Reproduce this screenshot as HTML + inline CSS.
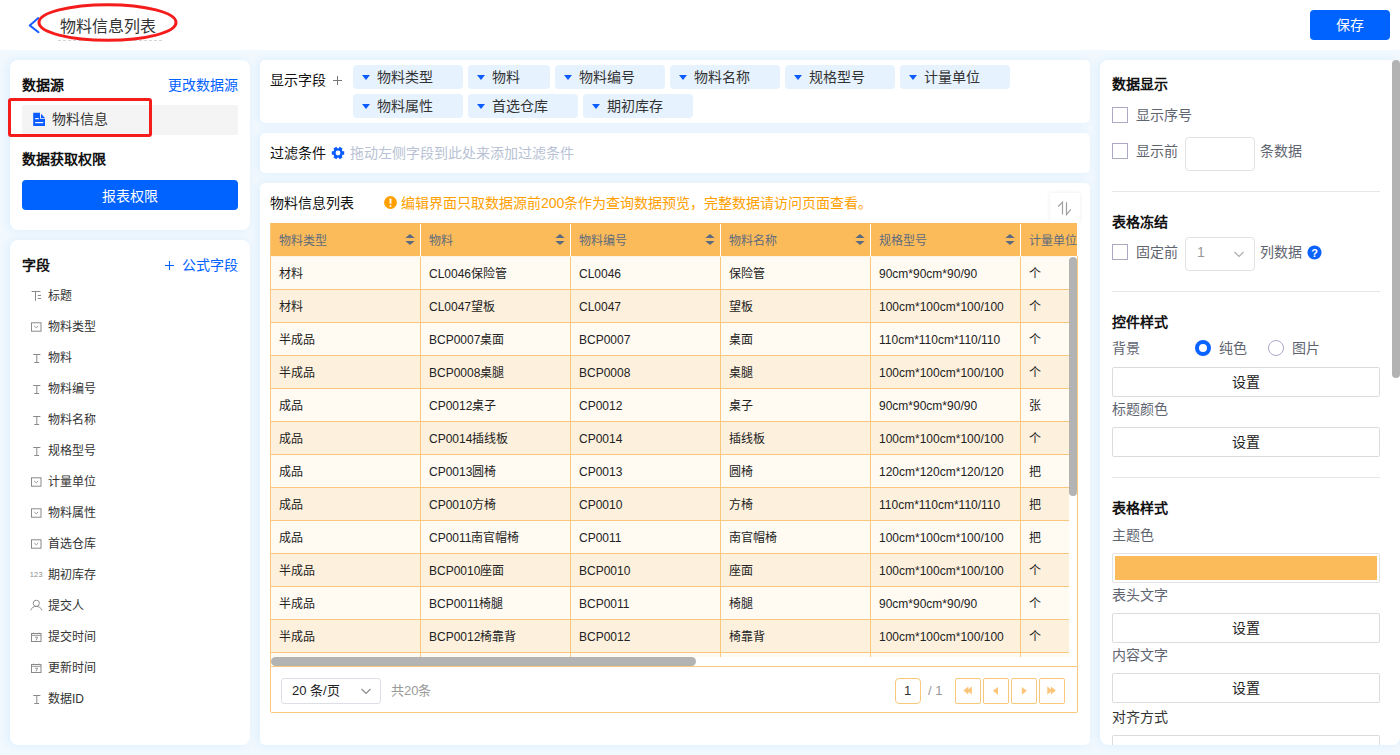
<!DOCTYPE html>
<html lang="zh-CN"><head><meta charset="utf-8">
<style>
*{box-sizing:border-box;margin:0;padding:0}
html,body{width:1400px;height:755px;overflow:hidden}
body{position:relative;font-family:"Liberation Sans",sans-serif;background:#f1f8fe;color:#333}
.a{position:absolute}
.t{position:absolute;white-space:nowrap}
.f12{font-size:12px;line-height:12px}
.f13{font-size:13px;line-height:13px}
.f14{font-size:14px;line-height:12px}
.f16{font-size:16px;line-height:16px}
.b{font-weight:bold}
.panel{position:absolute;background:#fff;border-radius:8px;box-shadow:-2px 0 8px rgba(0,150,255,0.09)}
.pc{border-radius:5px}
.blue{color:#0062ff}
.chip{position:absolute;height:24px;background:#e6f2fe;border-radius:4px}
.chip i{position:absolute;left:9px;top:9px;width:0;height:0;border-left:4px solid transparent;border-right:4px solid transparent;border-top:5px solid #0a5cff;top:10px}
.chip span{position:absolute;left:24px;top:6px;font-size:14px;line-height:12px;color:#333;white-space:nowrap}
.fi{position:absolute;left:22px;width:200px;height:20px}
.fi span{position:absolute;left:26px;top:4px;font-size:12px;line-height:12px;color:#333;white-space:nowrap}
.fi svg{position:absolute;left:8px;top:0}
.cell{position:absolute;font-size:12px;line-height:12px;color:#222;white-space:nowrap}
.hd{position:absolute;font-size:12px;line-height:12px;color:#5e6b7d;white-space:nowrap}
.lbl{position:absolute;font-size:14px;line-height:12px;color:#5f6570;white-space:nowrap}
.hdr{position:absolute;font-size:14px;line-height:12px;color:#111;font-weight:bold;white-space:nowrap}
.btn{position:absolute;left:1112px;width:268px;height:30px;border:1px solid #dcdcdc;border-radius:2px;background:#fff}
.btn span{position:absolute;left:0;right:0;top:8px;text-align:center;font-size:14px;line-height:12px;color:#222}
.cb{position:absolute;width:16px;height:16px;border:1px solid #aaaac2;border-radius:0;background:#fff}
.hr{position:absolute;left:1112px;width:268px;height:1px;background:#e6e6e6}
</style></head><body>

<div class="a" style="left:0;top:0;width:1400px;height:50px;background:#fff"></div>
<svg class="a" style="left:24px;top:12px" width="24" height="28" viewBox="0 0 24 28"><path d="M14.3 6.1 L5.7 13.4 L14.5 20.2" fill="none" stroke="#1a5cff" stroke-width="2" stroke-linecap="round" stroke-linejoin="round"/></svg>
<div class="t f16" style="left:60px;top:19px;color:#333">物料信息列表</div>
<div class="a" style="left:58px;top:40px;width:104px;border-top:1px dashed #d4d4d4"></div>
<svg class="a" style="left:36px;top:2px" width="144" height="42" viewBox="0 0 144 42"><ellipse cx="71.5" cy="20.5" rx="68.5" ry="17.8" fill="none" stroke="#f51c1c" stroke-width="3"/></svg>
<div class="a" style="left:1310px;top:10px;width:80px;height:30px;background:#0062ff;border-radius:4px"></div>
<div class="t f14" style="left:1336px;top:19px;color:#fff">保存</div>

<div class="panel" style="left:10px;top:60px;width:240px;height:170px"></div>
<div class="t f14 b" style="left:22px;top:79px;color:#111">数据源</div>
<div class="t f14 blue" style="left:168px;top:79px">更改数据源</div>
<div class="a" style="left:22px;top:105px;width:216px;height:30px;background:#f4f4f5;border-radius:2px"></div>
<svg class="a" style="left:28px;top:108px" width="24" height="24" viewBox="0 0 24 24"><path d="M5.2 4.8 H12 V10.8 H17 V18.1 H5.2Z" fill="#0a5cff"/><path d="M13 5.7 L17 9.9 H13Z" fill="#0a5cff"/><rect x="7.2" y="10" width="3.6" height="1.2" fill="#fff"/><rect x="7.2" y="14" width="8" height="1.2" fill="#fff"/></svg>
<div class="t f14" style="left:52px;top:113px;color:#333">物料信息</div>
<div class="a" style="left:8px;top:98px;width:144px;height:39px;border:3px solid #f51c1c;border-radius:3px"></div>
<div class="t f14 b" style="left:22px;top:153px;color:#111">数据获取权限</div>
<div class="a" style="left:22px;top:180px;width:216px;height:30px;background:#0062ff;border-radius:4px"></div>
<div class="t f14" style="left:102px;top:190px;color:#fff">报表权限</div>

<div class="panel" style="left:10px;top:240px;width:240px;height:505px"></div>
<div class="t f14 b" style="left:22px;top:259px;color:#111">字段</div>
<svg class="a" style="left:164px;top:260px" width="11" height="11" viewBox="0 0 11 11"><path d="M5.5 1V10M1 5.5H10" stroke="#0062ff" stroke-width="1.1"/></svg><div class="t f14 blue" style="left:182px;top:259px">公式字段</div>

<div class="fi" style="top:286px"><svg width="14" height="20" viewBox="0 0 14 20"><path d="M1.6 5.5H10.4M5.5 5.5V14.8M7.8 9.5H11M7.8 12.5H11" stroke="#8a8a8a" stroke-width="1" fill="none"/></svg><span>标题</span></div>
<div class="fi" style="top:317px"><svg width="14" height="20" viewBox="0 0 14 20"><rect x="1.5" y="5.8" width="9.5" height="8.4" fill="none" stroke="#8a8a8a"/><path d="M4.3 9L6.25 10.8L8.2 9" stroke="#8a8a8a" fill="none" stroke-width="0.9"/></svg><span>物料类型</span></div>
<div class="fi" style="top:348px"><svg width="14" height="20" viewBox="0 0 14 20"><path d="M3.2 6.5H10.4M6.8 6.5V14.3M4.3 14.5H9.1" stroke="#8a8a8a" stroke-width="1" fill="none"/></svg><span>物料</span></div>
<div class="fi" style="top:379px"><svg width="14" height="20" viewBox="0 0 14 20"><path d="M3.2 6.5H10.4M6.8 6.5V14.3M4.3 14.5H9.1" stroke="#8a8a8a" stroke-width="1" fill="none"/></svg><span>物料编号</span></div>
<div class="fi" style="top:410px"><svg width="14" height="20" viewBox="0 0 14 20"><path d="M3.2 6.5H10.4M6.8 6.5V14.3M4.3 14.5H9.1" stroke="#8a8a8a" stroke-width="1" fill="none"/></svg><span>物料名称</span></div>
<div class="fi" style="top:441px"><svg width="14" height="20" viewBox="0 0 14 20"><path d="M3.2 6.5H10.4M6.8 6.5V14.3M4.3 14.5H9.1" stroke="#8a8a8a" stroke-width="1" fill="none"/></svg><span>规格型号</span></div>
<div class="fi" style="top:472px"><svg width="14" height="20" viewBox="0 0 14 20"><rect x="1.5" y="5.8" width="9.5" height="8.4" fill="none" stroke="#8a8a8a"/><path d="M4.3 9L6.25 10.8L8.2 9" stroke="#8a8a8a" fill="none" stroke-width="0.9"/></svg><span>计量单位</span></div>
<div class="fi" style="top:503px"><svg width="14" height="20" viewBox="0 0 14 20"><rect x="1.5" y="5.8" width="9.5" height="8.4" fill="none" stroke="#8a8a8a"/><path d="M4.3 9L6.25 10.8L8.2 9" stroke="#8a8a8a" fill="none" stroke-width="0.9"/></svg><span>物料属性</span></div>
<div class="fi" style="top:534px"><svg width="14" height="20" viewBox="0 0 14 20"><rect x="1.5" y="5.8" width="9.5" height="8.4" fill="none" stroke="#8a8a8a"/><path d="M4.3 9L6.25 10.8L8.2 9" stroke="#8a8a8a" fill="none" stroke-width="0.9"/></svg><span>首选仓库</span></div>
<div class="fi" style="top:565px"><svg width="16" height="20" viewBox="0 0 16 20"><text x="-0.3" y="12.2" font-size="7.4" fill="#8a8a8a" font-family="Liberation Sans" letter-spacing="0.3">123</text></svg><span>期初库存</span></div>
<div class="fi" style="top:596px"><svg width="14" height="20" viewBox="0 0 14 20"><circle cx="6.3" cy="7.3" r="3.1" fill="none" stroke="#8a8a8a" stroke-width="0.95"/><path d="M0.8 14.3C1.6 11.6 3.8 10.4 6.3 10.4S11 11.6 11.8 14.3" fill="none" stroke="#8a8a8a" stroke-width="0.95"/></svg><span>提交人</span></div>
<div class="fi" style="top:627px"><svg width="14" height="20" viewBox="0 0 14 20"><rect x="1.5" y="6.5" width="9.5" height="8" fill="none" stroke="#8a8a8a"/><path d="M1.5 8.3H11M3.5 5.6V7M9 5.6V7M5 10.2H7.6L6 13.4" stroke="#8a8a8a" stroke-width="0.9" fill="none"/></svg><span>提交时间</span></div>
<div class="fi" style="top:658px"><svg width="14" height="20" viewBox="0 0 14 20"><rect x="1.5" y="6.5" width="9.5" height="8" fill="none" stroke="#8a8a8a"/><path d="M1.5 8.3H11M3.5 5.6V7M9 5.6V7M5 10.2H7.6L6 13.4" stroke="#8a8a8a" stroke-width="0.9" fill="none"/></svg><span>更新时间</span></div>
<div class="fi" style="top:689px"><svg width="14" height="20" viewBox="0 0 14 20"><path d="M3.2 6.5H10.4M6.8 6.5V14.3M4.3 14.5H9.1" stroke="#8a8a8a" stroke-width="1" fill="none"/></svg><span>数据ID</span></div>
<div class="panel pc" style="left:260px;top:60px;width:830px;height:63px"></div>
<div class="t f14" style="left:270px;top:74px;color:#111">显示字段</div>
<svg class="a" style="left:333px;top:76px" width="9" height="9" viewBox="0 0 9 9"><path d="M4.5 0V9M0 4.5H9" stroke="#777" stroke-width="1"/></svg>

<div class="chip" style="left:353px;top:65px;width:110px"><i></i><span>物料类型</span></div>
<div class="chip" style="left:468px;top:65px;width:82px"><i></i><span>物料</span></div>
<div class="chip" style="left:555px;top:65px;width:110px"><i></i><span>物料编号</span></div>
<div class="chip" style="left:670px;top:65px;width:110px"><i></i><span>物料名称</span></div>
<div class="chip" style="left:785px;top:65px;width:110px"><i></i><span>规格型号</span></div>
<div class="chip" style="left:900px;top:65px;width:110px"><i></i><span>计量单位</span></div>
<div class="chip" style="left:353px;top:94px;width:110px"><i></i><span>物料属性</span></div>
<div class="chip" style="left:468px;top:94px;width:110px"><i></i><span>首选仓库</span></div>
<div class="chip" style="left:583px;top:94px;width:110px"><i></i><span>期初库存</span></div>
<div class="panel pc" style="left:260px;top:133px;width:830px;height:40px"></div>
<div class="t f14" style="left:270px;top:147px;color:#111">过滤条件</div>
<svg class="a" style="left:330.5px;top:146px" width="14" height="14" viewBox="0 0 14 14"><path d="M11.55 5.17 L13.18 5.34 L13.18 8.66 L11.55 8.83 L10.85 10.03 L11.53 11.53 L8.66 13.18 L7.69 11.85 L6.31 11.85 L5.34 13.18 L2.47 11.53 L3.15 10.03 L2.45 8.83 L0.82 8.66 L0.82 5.34 L2.45 5.17 L3.15 3.97 L2.47 2.47 L5.34 0.82 L6.31 2.15 L7.69 2.15 L8.66 0.82 L11.53 2.47 L10.85 3.97Z" fill="#0a5cff"/><circle cx="7" cy="7" r="2.4" fill="#fff"/></svg>
<div class="t f14" style="left:350px;top:147px;color:#b8c2d4">拖动左侧字段到此处来添加过滤条件</div>

<div class="panel pc" style="left:260px;top:183px;width:830px;height:562px"></div>
<div class="t f14" style="left:270px;top:197px;color:#111">物料信息列表</div>
<svg class="a" style="left:384px;top:196px" width="13" height="13" viewBox="0 0 13 13"><circle cx="6.5" cy="6.5" r="6.4" fill="#ffa000"/><rect x="5.6" y="2.6" width="1.8" height="5.2" rx="0.6" fill="#fff"/><circle cx="6.5" cy="9.9" r="1" fill="#fff"/></svg>
<div class="t f14" style="left:401px;top:197px;color:#ffa000">编辑界面只取数据源前200条作为查询数据预览，完整数据请访问页面查看。</div>
<div class="a" style="left:1050px;top:193px;width:30px;height:30px;background:#fff;box-shadow:0 0 4px rgba(0,0,0,0.08)"></div>
<svg class="a" style="left:1050px;top:193px" width="30" height="30" viewBox="0 0 30 30"><path d="M8.2 13.5L12.5 9.2V21.6M16.5 9.2V21.6L20.8 16.3" fill="none" stroke="#a0a0a0" stroke-width="1.2"/></svg>

<div class="a" style="left:270px;top:223px;width:808px;height:443px;overflow:hidden;background:#fff">
<div class="a" style="left:0;top:0;width:807px;height:33px;background:#fbbb5a"></div>
<div class="hd" style="left:9px;top:12px">物料类型</div>
<svg class="a" style="left:135px;top:10px" width="10" height="13" viewBox="0 0 10 13"><path d="M5 0.9L9.7 5H0.3Z M5 12.1L9.7 8H0.3Z" fill="#5a6a80"/></svg>
<div class="a" style="left:150px;top:1px;width:1px;height:32px;background:#fff"></div>
<div class="hd" style="left:159px;top:12px">物料</div>
<svg class="a" style="left:285px;top:10px" width="10" height="13" viewBox="0 0 10 13"><path d="M5 0.9L9.7 5H0.3Z M5 12.1L9.7 8H0.3Z" fill="#5a6a80"/></svg>
<div class="a" style="left:300px;top:1px;width:1px;height:32px;background:#fff"></div>
<div class="hd" style="left:309px;top:12px">物料编号</div>
<svg class="a" style="left:435px;top:10px" width="10" height="13" viewBox="0 0 10 13"><path d="M5 0.9L9.7 5H0.3Z M5 12.1L9.7 8H0.3Z" fill="#5a6a80"/></svg>
<div class="a" style="left:450px;top:1px;width:1px;height:32px;background:#fff"></div>
<div class="hd" style="left:459px;top:12px">物料名称</div>
<svg class="a" style="left:585px;top:10px" width="10" height="13" viewBox="0 0 10 13"><path d="M5 0.9L9.7 5H0.3Z M5 12.1L9.7 8H0.3Z" fill="#5a6a80"/></svg>
<div class="a" style="left:600px;top:1px;width:1px;height:32px;background:#fff"></div>
<div class="hd" style="left:609px;top:12px">规格型号</div>
<svg class="a" style="left:735px;top:10px" width="10" height="13" viewBox="0 0 10 13"><path d="M5 0.9L9.7 5H0.3Z M5 12.1L9.7 8H0.3Z" fill="#5a6a80"/></svg>
<div class="a" style="left:750px;top:1px;width:1px;height:32px;background:#fff"></div>
<div class="hd" style="left:759px;top:12px">计量单位</div>
<div class="a" style="left:0;top:34px;width:799px;height:33px;background:#fffaf2;border-bottom:1px solid #f9c87c"></div>
<div class="cell" style="left:9px;top:45px">材料</div>
<div class="cell" style="left:159px;top:45px">CL0046保险管</div>
<div class="cell" style="left:309px;top:45px">CL0046</div>
<div class="cell" style="left:459px;top:45px">保险管</div>
<div class="cell" style="left:609px;top:45px">90cm*90cm*90/90</div>
<div class="cell" style="left:759px;top:45px">个</div>
<div class="a" style="left:0;top:67px;width:799px;height:33px;background:#fdf0dd;border-bottom:1px solid #f9c87c"></div>
<div class="cell" style="left:9px;top:78px">材料</div>
<div class="cell" style="left:159px;top:78px">CL0047望板</div>
<div class="cell" style="left:309px;top:78px">CL0047</div>
<div class="cell" style="left:459px;top:78px">望板</div>
<div class="cell" style="left:609px;top:78px">100cm*100cm*100/100</div>
<div class="cell" style="left:759px;top:78px">个</div>
<div class="a" style="left:0;top:100px;width:799px;height:33px;background:#fffaf2;border-bottom:1px solid #f9c87c"></div>
<div class="cell" style="left:9px;top:111px">半成品</div>
<div class="cell" style="left:159px;top:111px">BCP0007桌面</div>
<div class="cell" style="left:309px;top:111px">BCP0007</div>
<div class="cell" style="left:459px;top:111px">桌面</div>
<div class="cell" style="left:609px;top:111px">110cm*110cm*110/110</div>
<div class="cell" style="left:759px;top:111px">个</div>
<div class="a" style="left:0;top:133px;width:799px;height:33px;background:#fdf0dd;border-bottom:1px solid #f9c87c"></div>
<div class="cell" style="left:9px;top:144px">半成品</div>
<div class="cell" style="left:159px;top:144px">BCP0008桌腿</div>
<div class="cell" style="left:309px;top:144px">BCP0008</div>
<div class="cell" style="left:459px;top:144px">桌腿</div>
<div class="cell" style="left:609px;top:144px">100cm*100cm*100/100</div>
<div class="cell" style="left:759px;top:144px">个</div>
<div class="a" style="left:0;top:166px;width:799px;height:33px;background:#fffaf2;border-bottom:1px solid #f9c87c"></div>
<div class="cell" style="left:9px;top:177px">成品</div>
<div class="cell" style="left:159px;top:177px">CP0012桌子</div>
<div class="cell" style="left:309px;top:177px">CP0012</div>
<div class="cell" style="left:459px;top:177px">桌子</div>
<div class="cell" style="left:609px;top:177px">90cm*90cm*90/90</div>
<div class="cell" style="left:759px;top:177px">张</div>
<div class="a" style="left:0;top:199px;width:799px;height:33px;background:#fdf0dd;border-bottom:1px solid #f9c87c"></div>
<div class="cell" style="left:9px;top:210px">成品</div>
<div class="cell" style="left:159px;top:210px">CP0014插线板</div>
<div class="cell" style="left:309px;top:210px">CP0014</div>
<div class="cell" style="left:459px;top:210px">插线板</div>
<div class="cell" style="left:609px;top:210px">100cm*100cm*100/100</div>
<div class="cell" style="left:759px;top:210px">个</div>
<div class="a" style="left:0;top:232px;width:799px;height:33px;background:#fffaf2;border-bottom:1px solid #f9c87c"></div>
<div class="cell" style="left:9px;top:243px">成品</div>
<div class="cell" style="left:159px;top:243px">CP0013圆椅</div>
<div class="cell" style="left:309px;top:243px">CP0013</div>
<div class="cell" style="left:459px;top:243px">圆椅</div>
<div class="cell" style="left:609px;top:243px">120cm*120cm*120/120</div>
<div class="cell" style="left:759px;top:243px">把</div>
<div class="a" style="left:0;top:265px;width:799px;height:33px;background:#fdf0dd;border-bottom:1px solid #f9c87c"></div>
<div class="cell" style="left:9px;top:276px">成品</div>
<div class="cell" style="left:159px;top:276px">CP0010方椅</div>
<div class="cell" style="left:309px;top:276px">CP0010</div>
<div class="cell" style="left:459px;top:276px">方椅</div>
<div class="cell" style="left:609px;top:276px">110cm*110cm*110/110</div>
<div class="cell" style="left:759px;top:276px">把</div>
<div class="a" style="left:0;top:298px;width:799px;height:33px;background:#fffaf2;border-bottom:1px solid #f9c87c"></div>
<div class="cell" style="left:9px;top:309px">成品</div>
<div class="cell" style="left:159px;top:309px">CP0011南官帽椅</div>
<div class="cell" style="left:309px;top:309px">CP0011</div>
<div class="cell" style="left:459px;top:309px">南官帽椅</div>
<div class="cell" style="left:609px;top:309px">100cm*100cm*100/100</div>
<div class="cell" style="left:759px;top:309px">把</div>
<div class="a" style="left:0;top:331px;width:799px;height:33px;background:#fdf0dd;border-bottom:1px solid #f9c87c"></div>
<div class="cell" style="left:9px;top:342px">半成品</div>
<div class="cell" style="left:159px;top:342px">BCP0010座面</div>
<div class="cell" style="left:309px;top:342px">BCP0010</div>
<div class="cell" style="left:459px;top:342px">座面</div>
<div class="cell" style="left:609px;top:342px">100cm*100cm*100/100</div>
<div class="cell" style="left:759px;top:342px">个</div>
<div class="a" style="left:0;top:364px;width:799px;height:33px;background:#fffaf2;border-bottom:1px solid #f9c87c"></div>
<div class="cell" style="left:9px;top:375px">半成品</div>
<div class="cell" style="left:159px;top:375px">BCP0011椅腿</div>
<div class="cell" style="left:309px;top:375px">BCP0011</div>
<div class="cell" style="left:459px;top:375px">椅腿</div>
<div class="cell" style="left:609px;top:375px">90cm*90cm*90/90</div>
<div class="cell" style="left:759px;top:375px">个</div>
<div class="a" style="left:0;top:397px;width:799px;height:33px;background:#fdf0dd;border-bottom:1px solid #f9c87c"></div>
<div class="cell" style="left:9px;top:408px">半成品</div>
<div class="cell" style="left:159px;top:408px">BCP0012椅靠背</div>
<div class="cell" style="left:309px;top:408px">BCP0012</div>
<div class="cell" style="left:459px;top:408px">椅靠背</div>
<div class="cell" style="left:609px;top:408px">100cm*100cm*100/100</div>
<div class="cell" style="left:759px;top:408px">个</div>
<div class="a" style="left:0;top:33px;width:807px;height:1px;background:#fdf3e3"></div>
<div class="a" style="left:0;top:430px;width:799px;height:33px;background:#fffaf2"></div>
<div class="a" style="left:150px;top:34px;width:1px;height:410px;background:#f9c87c"></div>
<div class="a" style="left:300px;top:34px;width:1px;height:410px;background:#f9c87c"></div>
<div class="a" style="left:450px;top:34px;width:1px;height:410px;background:#f9c87c"></div>
<div class="a" style="left:600px;top:34px;width:1px;height:410px;background:#f9c87c"></div>
<div class="a" style="left:750px;top:34px;width:1px;height:410px;background:#f9c87c"></div>
<div class="a" style="left:0;top:0;width:1px;height:443px;background:#f9c87c"></div>
<div class="a" style="left:807px;top:33px;width:1px;height:410px;background:#f9c87c"></div>
<div class="a" style="left:799px;top:33px;width:8px;height:410px;background:#fff"></div>
<div class="a" style="left:799px;top:34px;width:8px;height:239px;background:#b3b3b3;border-radius:4px"></div>
<div class="a" style="left:807px;top:33px;width:1px;height:410px;background:#f9c87c"></div>
<div class="a" style="left:1px;top:434px;width:798px;height:9px;background:#fff"></div>
<div class="a" style="left:1px;top:434px;width:425px;height:9px;background:#b3b3b3;border-radius:4.5px"></div>
</div>
<div class="a" style="left:270px;top:666px;width:808px;height:47px;border:1px solid #f9c87c;border-radius:0 0 2px 2px;background:#fff"></div>
<div class="a" style="left:281px;top:678px;width:100px;height:26px;border:1px solid #dcdfe6;border-radius:3px"></div>
<div class="t" style="left:292px;top:685px;font-size:13px;line-height:12px;color:#222">20 条/页</div>
<svg class="a" style="left:360px;top:686px" width="12" height="10" viewBox="0 0 12 10"><path d="M1.5 3L6 7.5L10.5 3" fill="none" stroke="#888" stroke-width="1.1"/></svg>
<div class="t" style="left:391px;top:685px;font-size:13px;line-height:12px;color:#999">共20条</div>

<div class="a" style="left:895px;top:678px;width:26px;height:26px;border:1px solid #f9c87c;border-radius:4px"></div>
<div class="t" style="left:904px;top:685px;font-size:13px;line-height:12px;color:#333">1</div>
<div class="t" style="left:928px;top:685px;font-size:13px;line-height:12px;color:#999">/ 1</div>
<div class="a" style="left:955px;top:678px;width:26px;height:26px;border:1px solid #f9c87c;border-radius:2px"></div>
<svg class="a" style="left:955px;top:678px" width="26" height="26" viewBox="0 0 26 26"><path d="M8.3 12.5L13.3 8.5V16.5Z M11.9 12.5L16.9 8.5V16.5Z" fill="#fcc57a"/></svg>
<div class="a" style="left:983px;top:678px;width:26px;height:26px;border:1px solid #f9c87c;border-radius:2px"></div>
<svg class="a" style="left:983px;top:678px" width="26" height="26" viewBox="0 0 26 26"><path d="M9.8 12.8L15 8.9V16.7Z" fill="#fcc57a"/></svg>
<div class="a" style="left:1011px;top:678px;width:26px;height:26px;border:1px solid #f9c87c;border-radius:2px"></div>
<svg class="a" style="left:1011px;top:678px" width="26" height="26" viewBox="0 0 26 26"><path d="M10.8 8.9V16.7L15.9 12.8Z" fill="#fcc57a"/></svg>
<div class="a" style="left:1039px;top:678px;width:26px;height:26px;border:1px solid #f9c87c;border-radius:2px"></div>
<svg class="a" style="left:1039px;top:678px" width="26" height="26" viewBox="0 0 26 26"><path d="M8.3 8.5V16.5L13.3 12.5Z M11.9 8.5V16.5L16.9 12.5Z" fill="#fcc57a"/></svg>
<div class="panel" style="left:1100px;top:60px;width:300px;height:685px"></div>
<div class="hdr" style="left:1112px;top:78px">数据显示</div>
<div class="cb" style="left:1112px;top:107px"></div><div class="lbl" style="left:1136px;top:109px">显示序号</div>
<div class="cb" style="left:1112px;top:143px"></div><div class="lbl" style="left:1136px;top:145px">显示前</div>
<div class="a" style="left:1185px;top:137px;width:70px;height:34px;border:1px solid #e2e2e2;border-radius:4px"></div>
<div class="lbl" style="left:1260px;top:145px">条数据</div>
<div class="hr" style="top:191px"></div>
<div class="hdr" style="left:1112px;top:216px">表格冻结</div>
<div class="cb" style="left:1112px;top:244px"></div><div class="lbl" style="left:1136px;top:246px">固定前</div>
<div class="a" style="left:1185px;top:237px;width:70px;height:34px;border:1px solid #e2e2e2;border-radius:4px"></div>
<div class="lbl" style="left:1197px;top:246px;color:#999">1</div>
<svg class="a" style="left:1233px;top:249px" width="12" height="10" viewBox="0 0 12 10"><path d="M1.5 3L6 7.5L10.5 3" fill="none" stroke="#aaa" stroke-width="1.1"/></svg>
<div class="lbl" style="left:1260px;top:246px">列数据</div>
<svg class="a" style="left:1307px;top:245px" width="15" height="15" viewBox="0 0 15 15"><circle cx="7.5" cy="7.5" r="7" fill="#0a62ff"/><text x="7.5" y="11.5" text-anchor="middle" font-size="11" font-weight="bold" fill="#fff" font-family="Liberation Sans">?</text></svg>
<div class="hr" style="top:291px"></div>
<div class="hdr" style="left:1112px;top:316px">控件样式</div>
<div class="lbl" style="left:1112px;top:342px">背景</div>
<div class="a" style="left:1195px;top:340px;width:16px;height:16px;border-radius:50%;border:4.5px solid #0a62ff;background:#fff"></div>
<div class="lbl" style="left:1219px;top:342px">纯色</div>
<div class="a" style="left:1268px;top:340px;width:16px;height:16px;border-radius:50%;border:1px solid #aaaac2;background:#fff"></div>
<div class="lbl" style="left:1292px;top:342px">图片</div>
<div class="btn" style="top:367px"><span>设置</span></div>
<div class="lbl" style="left:1112px;top:403px">标题颜色</div>
<div class="btn" style="top:427px"><span>设置</span></div>
<div class="hr" style="top:477px"></div>
<div class="hdr" style="left:1112px;top:502px">表格样式</div>
<div class="lbl" style="left:1112px;top:529px">主题色</div>
<div class="a" style="left:1112px;top:553px;width:268px;height:30px;border:1px solid #e2e2e2;border-radius:2px;background:#fff"></div>
<div class="a" style="left:1115px;top:556px;width:262px;height:24px;background:#fbbb5a"></div>
<div class="lbl" style="left:1112px;top:589px">表头文字</div>
<div class="btn" style="top:613px"><span>设置</span></div>
<div class="lbl" style="left:1112px;top:649px">内容文字</div>
<div class="btn" style="top:673px"><span>设置</span></div>
<div class="lbl" style="left:1112px;top:711px;color:#333">对齐方式</div>
<div class="btn" style="top:735px;height:10px;border-bottom:none;border-radius:2px 2px 0 0"></div>

<div class="a" style="left:1392px;top:60px;width:8px;height:318px;background:#b3b3b3;border-radius:4px"></div>
</body></html>
